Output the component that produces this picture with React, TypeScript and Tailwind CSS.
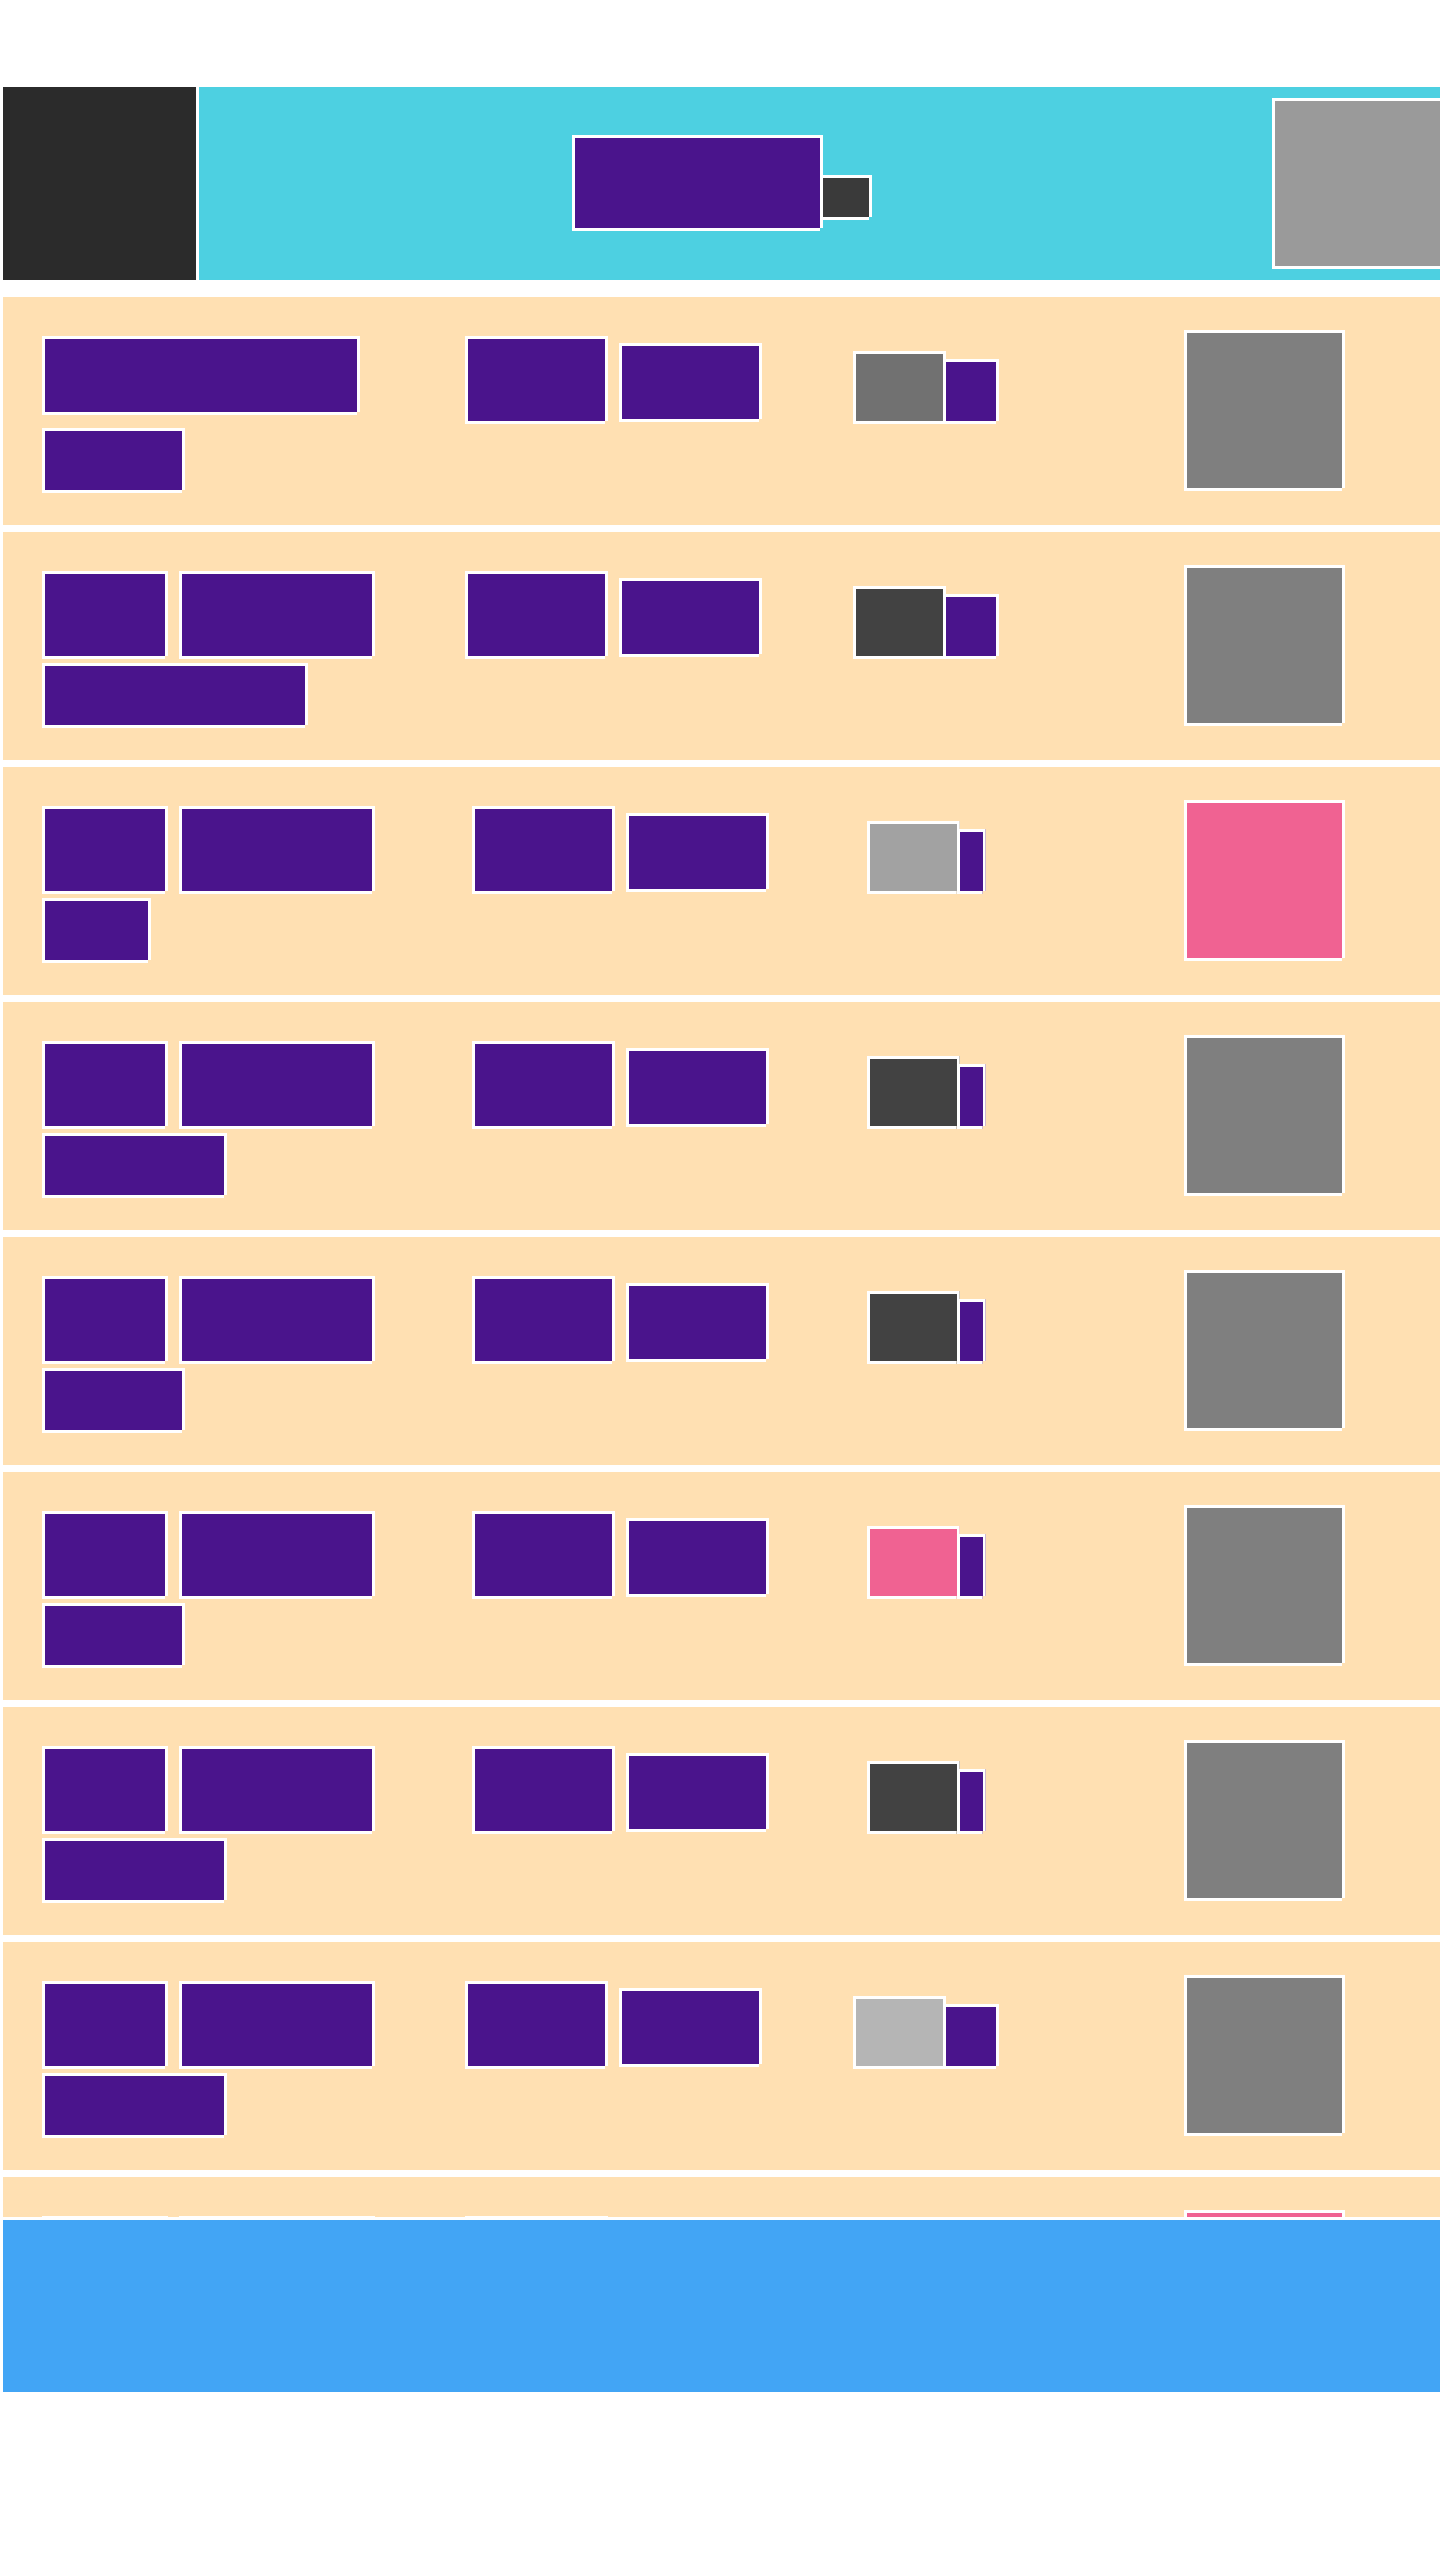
import clsx from "clsx";

// boxes are outlined in white, with the bottom-right corner of the outline left open
const notch =
  "[clip-path:polygon(0_0,100%_0,100%_calc(100%_-_3px),calc(100%_-_3px)_calc(100%_-_3px),calc(100%_-_3px)_100%,0_100%)]";

const Box = ({ className }: { className: string }) => (
  <div className={clsx("shrink-0 border-[3px] border-white", notch, className)} />
);

type Row = {
  wide?: boolean;
  sub: string;
  col1: string;
  thumb: string;
  tail: string;
  image: string;
};

const rows: Row[] = [
  { wide: true, sub: "w-[143px]", col1: "w-[423px]", thumb: "bg-[#717171]", tail: "w-[56px]", image: "bg-[#7f7f7f]" },
  { sub: "w-[266px]", col1: "w-[423px]", thumb: "bg-[#424242]", tail: "w-[56px]", image: "bg-[#7f7f7f]" },
  { sub: "w-[109px]", col1: "w-[430px]", thumb: "bg-[#a2a2a2]", tail: "w-[29px]", image: "bg-[#f06292]" },
  { sub: "w-[185px]", col1: "w-[430px]", thumb: "bg-[#424242]", tail: "w-[29px]", image: "bg-[#7f7f7f]" },
  { sub: "w-[143px]", col1: "w-[430px]", thumb: "bg-[#424242]", tail: "w-[29px]", image: "bg-[#7f7f7f]" },
  { sub: "w-[143px]", col1: "w-[430px]", thumb: "bg-[#f06292]", tail: "w-[29px]", image: "bg-[#7f7f7f]" },
  { sub: "w-[185px]", col1: "w-[430px]", thumb: "bg-[#424242]", tail: "w-[29px]", image: "bg-[#7f7f7f]" },
  { sub: "w-[185px]", col1: "w-[423px]", thumb: "bg-[#b5b5b5]", tail: "w-[56px]", image: "bg-[#7f7f7f]" },
  { sub: "w-[143px]", col1: "w-[423px]", thumb: "bg-[#717171]", tail: "w-[56px]", image: "bg-[#f06292]" },
];

const Header = () => (
  <div className="mt-[87px] flex h-[193px] gap-[3px]">
    <div className="w-[193px] shrink-0 bg-[#2b2b2b]" />
    <div className="flex w-[1260px] shrink-0 items-start bg-[#4dd0e1] pl-[373px]">
      <Box className="mt-[48px] h-[96px] w-[251px] bg-[#4a148c]" />
      <Box className="-ml-[3px] mt-[88px] h-[45px] w-[52px] bg-[#3a3a3a]" />
      <Box className="ml-[400px] mt-[11px] size-[171px] bg-[#9a9a9a]" />
    </div>
  </div>
);

const ListRow = ({ row }: { row: Row }) => (
  <div className="flex h-[228px] w-full shrink-0 items-start bg-[#ffe0b2] pl-[39px]">
    <div className="flex w-[758px] shrink-0 pt-[39px]">
      {/* title + subtitle */}
      <div className={clsx("flex shrink-0 flex-col", row.col1)}>
        <div className="flex h-[92px] items-start gap-[11px]">
          {row.wide ? (
            <Box className="h-[79px] w-[318px] bg-[#4a148c]" />
          ) : (
            <>
              <Box className="h-[88px] w-[126px] bg-[#4a148c]" />
              <Box className="h-[88px] w-[196px] bg-[#4a148c]" />
            </>
          )}
        </div>
        <Box className={clsx("h-[65px] bg-[#4a148c]", row.sub)} />
      </div>
      {/* meta */}
      <div className="flex flex-1 items-start gap-[11px]">
        <Box className="h-[88px] w-[143px] bg-[#4a148c]" />
        <Box className="mt-[7px] h-[79px] w-[143px] bg-[#4a148c]" />
      </div>
    </div>
    {/* status */}
    <div className="mt-[39px] flex h-[88px] w-[252px] shrink-0 items-end justify-center">
      <Box className={clsx("h-[73px] w-[93px]", row.thumb)} />
      <Box className={clsx("-ml-[3px] h-[65px] bg-[#4a148c]", row.tail)} />
    </div>
    <Box className={clsx("ml-[132px] mt-[33px] size-[161px]", row.image)} />
  </div>
);

export default function App() {
  return (
    <div className="min-h-screen w-[1440px] overflow-hidden bg-white pl-[3px]">
      <Header />
      <div className="mt-[17px] flex h-[1920px] flex-col gap-[7px] overflow-hidden">
        {rows.map((row, i) => (
          <ListRow key={i} row={row} />
        ))}
      </div>
      <div className="mt-[3px] h-[172px] bg-[#42a5f5]" />
    </div>
  );
}
